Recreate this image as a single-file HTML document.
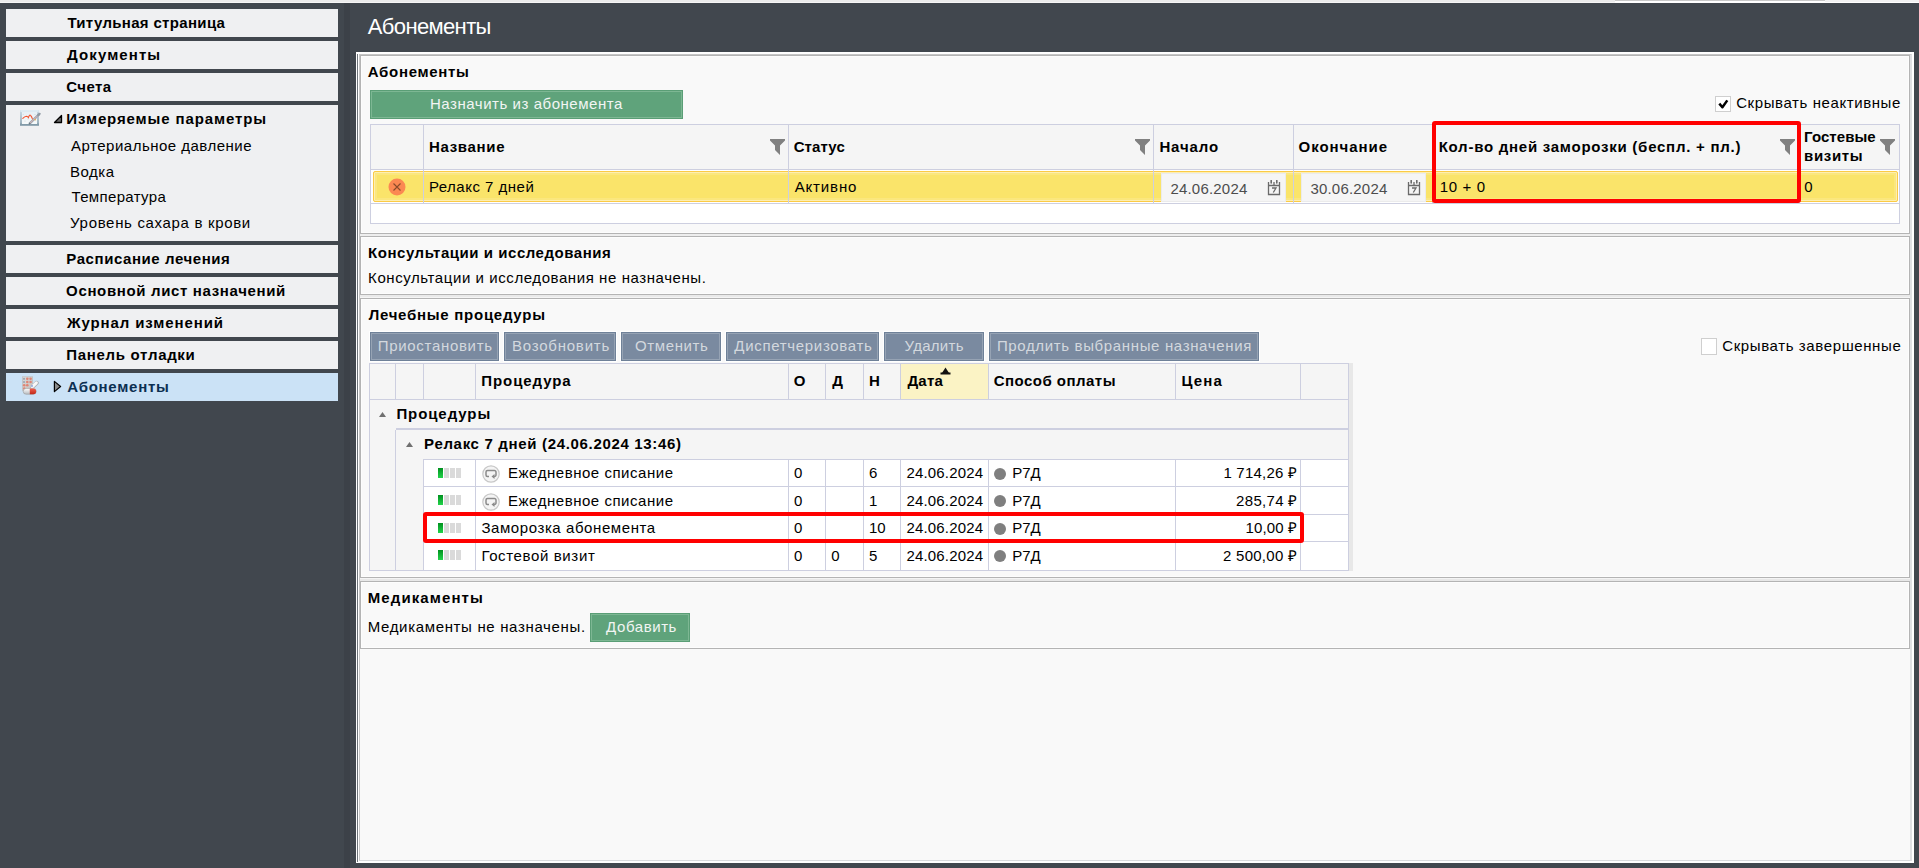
<!DOCTYPE html>
<html><head><meta charset="utf-8">
<style>
*{margin:0;padding:0;box-sizing:border-box}
html,body{width:1919px;height:868px;overflow:hidden}
body{background:#41474e;position:relative;font-family:"Liberation Sans",sans-serif;font-size:15px;line-height:15px;color:#000}
.a{position:absolute}
.t{position:absolute;white-space:nowrap;font-size:15px;line-height:15px}
.si{position:absolute;left:6px;width:332px;height:28px;background:#eff0f2}
.sec{position:absolute;left:360px;width:1550px;border:1px solid #b4b4b4;background:#f9f9f9;box-shadow:inset 1px 1px 0 #fdfdfd,inset -1px -1px 0 #fdfdfd}
.hl{position:absolute;height:1px;background:#cdcfe0}
.vl{position:absolute;width:1px;background:#cdcfe0}
.gbtn{position:absolute;background:#5fa37b;border:1px solid #5a9e76;box-shadow:inset 0 0 0 1px #7db793}
.bbtn{position:absolute;top:332px;height:29px;background:#7a8aa0;border:1px solid #6f8198;box-shadow:inset 0 0 0 1px #96a3b4,0 0 0 1px #fff}
.filt{position:absolute;width:15px;height:16px}
.prog{position:absolute;left:438px;width:23px;height:10px}
.dot{position:absolute;left:994px;width:12px;height:12px;border-radius:50%;background:#7f7f7f}
</style></head><body>
<!-- top strip -->
<div class="a" style="left:0;top:0;width:1919px;height:3px;background:#ebebeb;border-bottom:1px solid #f6f6f6"></div>
<div class="a" style="left:1825px;top:0;width:94px;height:3px;background:#f2f2f2;border-bottom:1px solid #fff"></div>
<div class="a" style="left:1615px;top:0;width:210px;height:3px;background:#fff;border-top:1px solid #c9c9c9"></div>
<!-- dark strip -->
<div class="a" style="left:344px;top:3px;width:6px;height:865px;background:#3c4148"></div>
<!-- sidebar -->
<div class="si" style="top:9px"></div>
<div class="si" style="top:41px"></div>
<div class="si" style="top:73px"></div>
<div class="si" style="top:105px;height:136px"></div>
<div class="si" style="top:245px"></div>
<div class="si" style="top:277px"></div>
<div class="si" style="top:309px"></div>
<div class="si" style="top:341px"></div>
<div class="si" style="top:373px;background:#cbe2f6"></div>
<!-- chart icon -->
<svg class="a" style="left:20px;top:110px" width="21" height="16" viewBox="0 0 21 16">
 <defs><linearGradient id="fr" x1="0" y1="0" x2="0" y2="1"><stop offset="0" stop-color="#d8e8f0"/><stop offset="0.15" stop-color="#c4d6e0"/><stop offset="0.8" stop-color="#9fb4c0"/><stop offset="1" stop-color="#6f8b9b"/></linearGradient>
 <linearGradient id="fi" x1="0" y1="0" x2="0" y2="1"><stop offset="0" stop-color="#e6f0f5"/><stop offset="1" stop-color="#f6f9fa"/></linearGradient></defs>
 <rect x="0" y="0" width="19" height="15.7" fill="url(#fr)"/>
 <rect x="0.5" y="0.4" width="18" height="1.3" fill="#e4f0f6"/>
 <rect x="2" y="2" width="15" height="12" fill="url(#fi)"/>
 <g fill="#c8d4da"><circle cx="3.2" cy="4.3" r="0.5"/><circle cx="8" cy="9" r="0.5"/><circle cx="5" cy="11" r="0.5"/><circle cx="15" cy="4.5" r="0.5"/></g>
 <path d="M2.8 8.4 Q4.6 6.6 6.5 6.3 Q7.6 6.4 8.4 7.6 Q9.5 4.2 10.5 5.3 Q11.5 6.2 12.3 8.5 L13 9.4" fill="none" stroke="#f2542e" stroke-width="1.1" stroke-linecap="round"/>
 <path d="M9.3 13.8 L19.2 4.2" stroke="#98a6b0" stroke-width="2.3"/>
 <path d="M9.5 13.6 L19 4.4" stroke="#e6b4b4" stroke-width="0.9"/>
 <path d="M18.2 5.2 L19.6 3.8" stroke="#8e9aa3" stroke-width="2.2" stroke-linecap="round"/>
 <path d="M9 14.3 L10.2 13.1" stroke="#6e7a84" stroke-width="1.4"/>
 <circle cx="15.2" cy="9.7" r="0.8" fill="#f0b040"/>
</svg>
<!-- expand triangle -->
<svg class="a" style="left:53px;top:114px" width="10" height="10" viewBox="0 0 10 10"><path d="M1.5 8.5 L8.5 1.5 L8.5 8.5 Z" fill="#6a6a6a" stroke="#000" stroke-width="1.3" stroke-linejoin="round"/></svg>
<!-- pills icon -->
<svg class="a" style="left:22px;top:376px" width="17" height="19" viewBox="0 0 17 19">
 <defs><linearGradient id="bl" x1="0" y1="0" x2="1" y2="1"><stop offset="0" stop-color="#dcdcdc"/><stop offset="1" stop-color="#c4c0be"/></linearGradient>
 <linearGradient id="pw" x1="0" y1="0" x2="0" y2="1"><stop offset="0" stop-color="#ffffff"/><stop offset="1" stop-color="#b8bcc0"/></linearGradient>
 <linearGradient id="pr" x1="0" y1="0" x2="0" y2="1"><stop offset="0" stop-color="#f06050"/><stop offset="1" stop-color="#c02818"/></linearGradient></defs>
 <rect x="0.3" y="0.8" width="10.4" height="13.6" fill="url(#bl)" stroke="#bdbab8" stroke-width="0.6"/>
 <g fill="#9aa6b4"><circle cx="2" cy="2.8" r="1.1"/><circle cx="2" cy="6" r="1.1"/></g>
 <g fill="#e08474"><circle cx="5.3" cy="2.8" r="1.3"/><circle cx="8.6" cy="2.8" r="1.3"/><circle cx="5.3" cy="6" r="1.3"/><circle cx="8.6" cy="6" r="1.3"/><circle cx="2.2" cy="9.3" r="1.3"/><circle cx="5.3" cy="9.3" r="1.3"/><circle cx="2.2" cy="12.4" r="1.2"/></g>
 <path d="M10.3 11 L14.6 7" stroke="#a8acb0" stroke-width="4.2" stroke-linecap="round"/>
 <path d="M10.1 10.8 L14.4 6.8" stroke="#f8f8f8" stroke-width="3" stroke-linecap="round"/>
 <path d="M9.5 10.5 L10.5 9.5" stroke="#5a7ad0" stroke-width="1.2"/>
 <rect x="1.2" y="12.4" width="13" height="5.8" rx="2.9" fill="url(#pw)" stroke="#9a9a9a" stroke-width="0.6"/>
 <path d="M7.8 12.4 H11.3 A2.9 2.9 0 0 1 11.3 18.2 H7.8 Z" fill="url(#pr)"/>
</svg>
<svg class="a" style="left:53px;top:380px" width="10" height="13" viewBox="0 0 10 13"><path d="M1.4 1.4 L7.6 6.5 L1.4 11.6 Z" fill="#8a8a8a" stroke="#000" stroke-width="1.2" stroke-linejoin="round"/></svg>

<!-- main panel frame -->
<div class="a" style="left:356px;top:52px;width:1558px;height:811px;background:#fff"></div>
<div class="a" style="left:357px;top:54px;width:1px;height:808px;background:#6f757b"></div>
<div class="a" style="left:359px;top:54px;width:1553px;height:807px;background:#f9f9f9;border-top:1px solid #c6c6c6;border-left:1px solid #c6c6c6;border-right:2px solid #dfe0e3;border-bottom:1px solid #d9dadd"></div>
<!-- gaps -->
<div class="a" style="left:360px;top:234px;width:1550px;height:2px;background:#eeeeee"></div>
<div class="a" style="left:360px;top:295px;width:1550px;height:3px;background:#eaeaea;border-bottom:1px solid #f5f5f5"></div>
<div class="a" style="left:360px;top:578px;width:1550px;height:3px;background:#e8e8e8;border-top:1px solid #f5f5f5"></div>
<!-- sections -->
<div class="sec" style="top:55px;height:179px"></div>
<div class="sec" style="top:236px;height:59px"></div>
<div class="sec" style="top:298px;height:280px"></div>
<div class="sec" style="top:581px;height:68px"></div>

<!-- S1 -->
<div class="gbtn" style="left:370px;top:90px;width:313px;height:29px"></div>
<div class="a" style="left:1715px;top:96px;width:16px;height:16px;background:#fff;border:1px solid #cfcfcf"></div>
<svg class="a" style="left:1715px;top:96px" width="16" height="16" viewBox="0 0 16 16"><path d="M4.3 7.6 L7.4 11.3 L12.3 4.4" fill="none" stroke="#000" stroke-width="2.5" stroke-linejoin="round"/></svg>
<!-- table 1 -->
<div class="a" style="left:370px;top:124px;width:1530px;height:100px;background:#fff;border:1px solid #cdcfe0"></div>
<div class="a" style="left:371px;top:125px;width:1528px;height:44px;background:#f5f5f5"></div>
<div class="hl" style="left:371px;top:169px;width:1528px"></div>
<div class="hl" style="left:371px;top:203px;width:1528px"></div>
<div class="vl" style="left:423px;top:125px;height:78px"></div>
<div class="vl" style="left:788px;top:125px;height:78px"></div>
<div class="vl" style="left:1153px;top:125px;height:78px"></div>
<div class="vl" style="left:1293px;top:125px;height:78px"></div>
<div class="vl" style="left:1432px;top:125px;height:78px"></div>
<div class="vl" style="left:1798px;top:125px;height:78px"></div>
<!-- yellow row -->
<div class="a" style="left:373px;top:171px;width:1525px;height:31px;background:#fae46a;border:1px solid #fbcb45;border-radius:2px;box-shadow:inset 0 0 0 1px #fdeeb2,inset 0 0 0 3px #fbe77e"></div>
<div class="a" style="left:423px;top:171px;width:1px;height:32px;background:#cdcfe0"></div>
<div class="a" style="left:788px;top:171px;width:1px;height:32px;background:#cdcfe0"></div>
<div class="a" style="left:1153px;top:171px;width:1px;height:32px;background:#cdcfe0"></div>
<div class="a" style="left:1293px;top:171px;width:1px;height:32px;background:#cdcfe0"></div>
<div class="a" style="left:1798px;top:171px;width:1px;height:32px;background:#cdcfe0"></div>
<!-- cancel icon -->
<svg class="a" style="left:388px;top:178px" width="18" height="18" viewBox="0 0 18 18"><circle cx="9" cy="9" r="8.5" fill="#fb8852"/><path d="M5.5 5.5 L12.5 12.5 M12.5 5.5 L5.5 12.5" stroke="#8a4a2a" stroke-width="1.1"/></svg>
<!-- date inputs -->
<div class="a" style="left:1161px;top:173px;width:125px;height:29px;background:#f5f5f5;border:1px solid #ebebeb"></div>
<div class="a" style="left:1301px;top:173px;width:125px;height:29px;background:#f5f5f5;border:1px solid #ebebeb"></div>
<svg class="a cal" style="left:1267px;top:180px" width="14" height="16" viewBox="0 0 14 16"><path d="M1.5 2 V14.5 H12.5 V2 M1.5 5.5 H12.5 M7 2 V5.5" fill="none" stroke="#6a6a6a" stroke-width="1.3"/><path d="M4.2 0.5 V3 M9.8 0.5 V3" stroke="#6a6a6a" stroke-width="1.6" stroke-linecap="round"/><path d="M5 8 H9 L6.3 12.5" fill="none" stroke="#6a6a6a" stroke-width="1.3"/></svg>
<svg class="a cal" style="left:1407px;top:180px" width="14" height="16" viewBox="0 0 14 16"><path d="M1.5 2 V14.5 H12.5 V2 M1.5 5.5 H12.5 M7 2 V5.5" fill="none" stroke="#6a6a6a" stroke-width="1.3"/><path d="M4.2 0.5 V3 M9.8 0.5 V3" stroke="#6a6a6a" stroke-width="1.6" stroke-linecap="round"/><path d="M5 8 H9 L6.3 12.5" fill="none" stroke="#6a6a6a" stroke-width="1.3"/></svg>
<!-- filter icons -->
<svg class="filt" style="left:770px;top:139px" viewBox="0 0 15 16"><path d="M0 0 H15 V1.5 L10 6.5 V16 L5 11 V6.5 L0 1.5 Z" fill="#808080"/></svg>
<svg class="filt" style="left:1135px;top:139px" viewBox="0 0 15 16"><path d="M0 0 H15 V1.5 L10 6.5 V16 L5 11 V6.5 L0 1.5 Z" fill="#808080"/></svg>
<svg class="filt" style="left:1780px;top:139px" viewBox="0 0 15 16"><path d="M0 0 H15 V1.5 L10 6.5 V16 L5 11 V6.5 L0 1.5 Z" fill="#808080"/></svg>
<svg class="filt" style="left:1880px;top:139px" viewBox="0 0 15 16"><path d="M0 0 H15 V1.5 L10 6.5 V16 L5 11 V6.5 L0 1.5 Z" fill="#808080"/></svg>
<!-- red box 1 -->
<div class="a" style="left:1432px;top:121px;width:369px;height:82px;border:4px solid #ff0000;border-radius:3px"></div>

<!-- S3 buttons -->
<div class="bbtn" style="left:370px;width:129px"></div>
<div class="bbtn" style="left:504px;width:112px"></div>
<div class="bbtn" style="left:621px;width:100px"></div>
<div class="bbtn" style="left:726px;width:153px"></div>
<div class="bbtn" style="left:884px;width:100px"></div>
<div class="bbtn" style="left:989px;width:270px"></div>
<div class="a" style="left:1701px;top:338px;width:16px;height:17px;background:#fff;border:1px solid #cfcfcf"></div>
<!-- table 2 -->
<div class="a" style="left:1349px;top:363px;width:4px;height:208px;background:#e8e8e8"></div>
<div class="a" style="left:369px;top:363px;width:980px;height:208px;background:#f5f5f5;border:1px solid #cdcfe0"></div>
<div class="a" style="left:901px;top:364px;width:87px;height:35px;background:#fbf3c5"></div>
<div class="hl" style="left:370px;top:399px;width:978px"></div>
<div class="vl" style="left:395px;top:364px;height:35px"></div>
<div class="vl" style="left:423px;top:364px;height:35px"></div>
<div class="vl" style="left:475px;top:364px;height:35px"></div>
<div class="vl" style="left:788px;top:364px;height:35px"></div>
<div class="vl" style="left:825px;top:364px;height:35px"></div>
<div class="vl" style="left:863px;top:364px;height:35px"></div>
<div class="vl" style="left:900px;top:364px;height:35px"></div>
<div class="vl" style="left:988px;top:364px;height:35px"></div>
<div class="vl" style="left:1175px;top:364px;height:35px"></div>
<div class="vl" style="left:1300px;top:364px;height:35px"></div>
<!-- sort arrow -->
<svg class="a" style="left:940px;top:367px" width="11" height="8" viewBox="0 0 11 8"><path d="M5.5 0.5 L9 6 H2 Z" fill="#111"/><rect x="0.5" y="5.5" width="10" height="2" fill="#111"/></svg>
<!-- group -->
<svg class="a" style="left:378px;top:411px" width="9" height="7" viewBox="0 0 9 7"><path d="M4.5 1 L8 6 H1 Z" fill="#707070"/></svg>
<div class="a" style="left:396px;top:428px;width:952px;height:2px;background:#cdcfe0"></div>
<div class="vl" style="left:395px;top:430px;height:140px"></div>
<svg class="a" style="left:405px;top:441px" width="9" height="7" viewBox="0 0 9 7"><path d="M4.5 1 L8 6 H1 Z" fill="#707070"/></svg>
<!-- data rows -->
<div class="a" style="left:423px;top:459px;width:925px;height:111px;background:#fff"></div>
<div class="hl" style="left:423px;top:459px;width:925px"></div>
<div class="hl" style="left:423px;top:486px;width:925px"></div>
<div class="hl" style="left:423px;top:514px;width:925px"></div>
<div class="hl" style="left:423px;top:541px;width:925px"></div>
<div class="vl" style="left:423px;top:459px;height:111px"></div>
<div class="vl" style="left:475px;top:459px;height:111px"></div>
<div class="vl" style="left:788px;top:459px;height:111px"></div>
<div class="vl" style="left:825px;top:459px;height:111px"></div>
<div class="vl" style="left:863px;top:459px;height:111px"></div>
<div class="vl" style="left:900px;top:459px;height:111px"></div>
<div class="vl" style="left:988px;top:459px;height:111px"></div>
<div class="vl" style="left:1175px;top:459px;height:111px"></div>
<div class="vl" style="left:1300px;top:459px;height:111px"></div>
<!-- progress icons -->
<svg class="prog" style="top:468px" viewBox="0 0 23 10"><defs><linearGradient id="gg" x1="0" y1="0" x2="0" y2="1"><stop offset="0" stop-color="#00901f"/><stop offset="1" stop-color="#22d44a"/></linearGradient></defs><rect x="0" y="0" width="5" height="10" fill="url(#gg)"/><rect x="6" y="0" width="5" height="10" fill="#dadada"/><rect x="12" y="0" width="5" height="10" fill="#dadada"/><rect x="18" y="0" width="5" height="10" fill="#dadada"/></svg>
<svg class="prog" style="top:495px" viewBox="0 0 23 10"><rect x="0" y="0" width="5" height="10" fill="url(#gg)"/><rect x="6" y="0" width="5" height="10" fill="#dadada"/><rect x="12" y="0" width="5" height="10" fill="#dadada"/><rect x="18" y="0" width="5" height="10" fill="#dadada"/></svg>
<svg class="prog" style="top:523px" viewBox="0 0 23 10"><rect x="0" y="0" width="5" height="10" fill="url(#gg)"/><rect x="6" y="0" width="5" height="10" fill="#dadada"/><rect x="12" y="0" width="5" height="10" fill="#dadada"/><rect x="18" y="0" width="5" height="10" fill="#dadada"/></svg>
<svg class="prog" style="top:550px" viewBox="0 0 23 10"><rect x="0" y="0" width="5" height="10" fill="url(#gg)"/><rect x="6" y="0" width="5" height="10" fill="#dadada"/><rect x="12" y="0" width="5" height="10" fill="#dadada"/><rect x="18" y="0" width="5" height="10" fill="#dadada"/></svg>
<!-- recurring icons -->
<svg class="a" style="left:482px;top:464.5px" width="18" height="18" viewBox="0 0 18 18"><circle cx="9" cy="9" r="8.2" fill="#f4f4f4" stroke="#c8c8c8" stroke-width="1.2"/><path d="M7 11.5 H5.5 A1.5 1.5 0 0 1 4 10 V7 A1.5 1.5 0 0 1 5.5 5.5 H12.5 A1.5 1.5 0 0 1 14 7 V10 A1.5 1.5 0 0 1 12.5 11.5 H11" fill="none" stroke="#8a8a8a" stroke-width="1.5"/><path d="M12.5 9 L9.5 11.5 L12.5 14 Z" fill="#8a8a8a"/></svg>
<svg class="a" style="left:482px;top:492.5px" width="18" height="18" viewBox="0 0 18 18"><circle cx="9" cy="9" r="8.2" fill="#f4f4f4" stroke="#c8c8c8" stroke-width="1.2"/><path d="M7 11.5 H5.5 A1.5 1.5 0 0 1 4 10 V7 A1.5 1.5 0 0 1 5.5 5.5 H12.5 A1.5 1.5 0 0 1 14 7 V10 A1.5 1.5 0 0 1 12.5 11.5 H11" fill="none" stroke="#8a8a8a" stroke-width="1.5"/><path d="M12.5 9 L9.5 11.5 L12.5 14 Z" fill="#8a8a8a"/></svg>
<!-- dots -->
<div class="dot" style="top:468px"></div>
<div class="dot" style="top:495px"></div>
<div class="dot" style="top:523px"></div>
<div class="dot" style="top:550px"></div>
<!-- red box 2 -->
<div class="a" style="left:423px;top:512px;width:881px;height:31px;border:4px solid #ff0000;border-radius:3px"></div>

<!-- S4 -->
<div class="gbtn" style="left:590px;top:613px;width:100px;height:29px"></div>

<div class="t" style="left:67.40px;top:15px;color:#000;font-weight:bold;letter-spacing:0.329px;">Титульная страница</div>
<div class="t" style="left:67.10px;top:47px;color:#000;font-weight:bold;letter-spacing:1.088px;">Документы</div>
<div class="t" style="left:66.20px;top:79px;color:#000;font-weight:bold;letter-spacing:0.450px;">Счета</div>
<div class="t" style="left:66.30px;top:111px;color:#000;font-weight:bold;letter-spacing:0.879px;">Измеряемые параметры</div>
<div class="t" style="left:71.10px;top:138px;color:#000;letter-spacing:0.490px;">Артериальное давление</div>
<div class="t" style="left:70.10px;top:164px;color:#000;letter-spacing:0.475px;">Водка</div>
<div class="t" style="left:71.50px;top:189px;color:#000;letter-spacing:0.340px;">Температура</div>
<div class="t" style="left:70.10px;top:215px;color:#000;letter-spacing:0.671px;">Уровень сахара в крови</div>
<div class="t" style="left:66.30px;top:251px;color:#000;font-weight:bold;letter-spacing:0.571px;">Расписание лечения</div>
<div class="t" style="left:66.10px;top:283px;color:#000;font-weight:bold;letter-spacing:0.648px;">Основной лист назначений</div>
<div class="t" style="left:67.10px;top:315px;color:#000;font-weight:bold;letter-spacing:0.887px;">Журнал изменений</div>
<div class="t" style="left:66.30px;top:347px;color:#000;font-weight:bold;letter-spacing:0.692px;">Панель отладки</div>
<div class="t" style="left:67.30px;top:379px;color:#0b2f52;font-weight:bold;letter-spacing:0.733px;">Абонементы</div>
<div class="t" style="left:367.80px;top:16px;color:#ffffff;font-size:22px;line-height:22px;letter-spacing:-0.633px;">Абонементы</div>
<div class="t" style="left:367.80px;top:64px;color:#000;font-weight:bold;letter-spacing:0.689px;">Абонементы</div>
<div class="t" style="left:429.90px;top:96px;color:#f2f5f3;letter-spacing:0.545px;">Назначить из абонемента</div>
<div class="t" style="left:1736.20px;top:95px;color:#000;letter-spacing:0.589px;">Скрывать неактивные</div>
<div class="t" style="left:428.90px;top:139px;color:#000;font-weight:bold;letter-spacing:0.700px;">Название</div>
<div class="t" style="left:793.70px;top:139px;color:#000;font-weight:bold;letter-spacing:0.100px;">Статус</div>
<div class="t" style="left:1159.40px;top:139px;color:#000;font-weight:bold;letter-spacing:0.900px;">Начало</div>
<div class="t" style="left:1298.50px;top:139px;color:#000;font-weight:bold;letter-spacing:0.963px;">Окончание</div>
<div class="t" style="left:1438.70px;top:139px;color:#000;font-weight:bold;letter-spacing:0.746px;">Кол-во дней заморозки (беспл. + пл.)</div>
<div class="t" style="left:1804.10px;top:129px;color:#000;font-weight:bold;letter-spacing:0.071px;">Гостевые</div>
<div class="t" style="left:1804.10px;top:148px;color:#000;font-weight:bold;letter-spacing:0.660px;">визиты</div>
<div class="t" style="left:428.90px;top:179px;color:#000;letter-spacing:0.500px;">Релакс 7 дней</div>
<div class="t" style="left:794.70px;top:179px;color:#000;letter-spacing:0.850px;">Активно</div>
<div class="t" style="left:1170.40px;top:181px;color:#4d4d4d;letter-spacing:0.200px;">24.06.2024</div>
<div class="t" style="left:1310.40px;top:181px;color:#4d4d4d;letter-spacing:0.200px;">30.06.2024</div>
<div class="t" style="left:1439.70px;top:179px;color:#000;letter-spacing:0.680px;">10 + 0</div>
<div class="t" style="left:1804.20px;top:179px;color:#000;">0</div>
<div class="t" style="left:368.10px;top:245px;color:#000;font-weight:bold;letter-spacing:0.531px;">Консультации и исследования</div>
<div class="t" style="left:368.10px;top:270px;color:#000;letter-spacing:0.577px;">Консультации и исследования не назначены.</div>
<div class="t" style="left:368.70px;top:307px;color:#000;font-weight:bold;letter-spacing:0.735px;">Лечебные процедуры</div>
<div class="t" style="left:377.70px;top:338px;color:#d3d8de;letter-spacing:0.692px;">Приостановить</div>
<div class="t" style="left:511.90px;top:338px;color:#d3d8de;letter-spacing:0.790px;">Возобновить</div>
<div class="t" style="left:634.90px;top:338px;color:#d3d8de;letter-spacing:0.643px;">Отменить</div>
<div class="t" style="left:734.30px;top:338px;color:#d3d8de;letter-spacing:0.687px;">Диспетчеризовать</div>
<div class="t" style="left:904.60px;top:338px;color:#d3d8de;letter-spacing:0.267px;">Удалить</div>
<div class="t" style="left:996.90px;top:338px;color:#d3d8de;letter-spacing:0.646px;">Продлить выбранные назначения</div>
<div class="t" style="left:1722.20px;top:338px;color:#000;letter-spacing:0.611px;">Скрывать завершенные</div>
<div class="t" style="left:481.30px;top:373px;color:#000;font-weight:bold;letter-spacing:0.913px;">Процедура</div>
<div class="t" style="left:793.70px;top:373px;color:#000;font-weight:bold;">О</div>
<div class="t" style="left:832.30px;top:373px;color:#000;font-weight:bold;">Д</div>
<div class="t" style="left:869.10px;top:373px;color:#000;font-weight:bold;">Н</div>
<div class="t" style="left:907.40px;top:373px;color:#000;font-weight:bold;letter-spacing:0.267px;">Дата</div>
<div class="t" style="left:993.80px;top:373px;color:#000;font-weight:bold;letter-spacing:0.467px;">Способ оплаты</div>
<div class="t" style="left:1181.40px;top:373px;color:#000;font-weight:bold;letter-spacing:1.167px;">Цена</div>
<div class="t" style="left:396.40px;top:406px;color:#000;font-weight:bold;letter-spacing:0.913px;">Процедуры</div>
<div class="t" style="left:424.10px;top:436px;color:#000;font-weight:bold;letter-spacing:0.674px;">Релакс 7 дней (24.06.2024 13:46)</div>
<div class="t" style="left:508.00px;top:465px;color:#000;letter-spacing:0.533px;">Ежедневное списание</div>
<div class="t" style="left:793.90px;top:465px;color:#000;">0</div>
<div class="t" style="left:869.00px;top:465px;color:#000;">6</div>
<div class="t" style="left:906.40px;top:465px;color:#000;letter-spacing:0.178px;">24.06.2024</div>
<div class="t" style="left:1012.30px;top:465px;color:#000;letter-spacing:-0.100px;">Р7Д</div>
<div class="t" style="left:1223.40px;top:465px;color:#000;letter-spacing:0.222px;">1 714,26 ₽</div>
<div class="t" style="left:508.00px;top:493px;color:#000;letter-spacing:0.533px;">Ежедневное списание</div>
<div class="t" style="left:793.90px;top:493px;color:#000;">0</div>
<div class="t" style="left:869.00px;top:493px;color:#000;">1</div>
<div class="t" style="left:906.40px;top:493px;color:#000;letter-spacing:0.178px;">24.06.2024</div>
<div class="t" style="left:1012.30px;top:493px;color:#000;letter-spacing:-0.100px;">Р7Д</div>
<div class="t" style="left:1236.10px;top:493px;color:#000;letter-spacing:0.329px;">285,74 ₽</div>
<div class="t" style="left:481.40px;top:520px;color:#000;letter-spacing:0.579px;">Заморозка абонемента</div>
<div class="t" style="left:793.90px;top:520px;color:#000;">0</div>
<div class="t" style="left:869.00px;top:520px;color:#000;">10</div>
<div class="t" style="left:906.40px;top:520px;color:#000;letter-spacing:0.178px;">24.06.2024</div>
<div class="t" style="left:1012.30px;top:520px;color:#000;letter-spacing:-0.100px;">Р7Д</div>
<div class="t" style="left:1245.60px;top:520px;color:#000;letter-spacing:0.133px;">10,00 ₽</div>
<div class="t" style="left:481.40px;top:548px;color:#000;letter-spacing:0.631px;">Гостевой визит</div>
<div class="t" style="left:793.90px;top:548px;color:#000;">0</div>
<div class="t" style="left:831.30px;top:548px;color:#000;">0</div>
<div class="t" style="left:869.00px;top:548px;color:#000;">5</div>
<div class="t" style="left:906.40px;top:548px;color:#000;letter-spacing:0.178px;">24.06.2024</div>
<div class="t" style="left:1012.30px;top:548px;color:#000;letter-spacing:-0.100px;">Р7Д</div>
<div class="t" style="left:1223.00px;top:548px;color:#000;letter-spacing:0.267px;">2 500,00 ₽</div>
<div class="t" style="left:367.70px;top:590px;color:#000;font-weight:bold;letter-spacing:1.110px;">Медикаменты</div>
<div class="t" style="left:367.70px;top:619px;color:#000;letter-spacing:0.658px;">Медикаменты не назначены.</div>
<div class="t" style="left:606.10px;top:619px;color:#f2f5f3;letter-spacing:0.571px;">Добавить</div>
</body></html>
